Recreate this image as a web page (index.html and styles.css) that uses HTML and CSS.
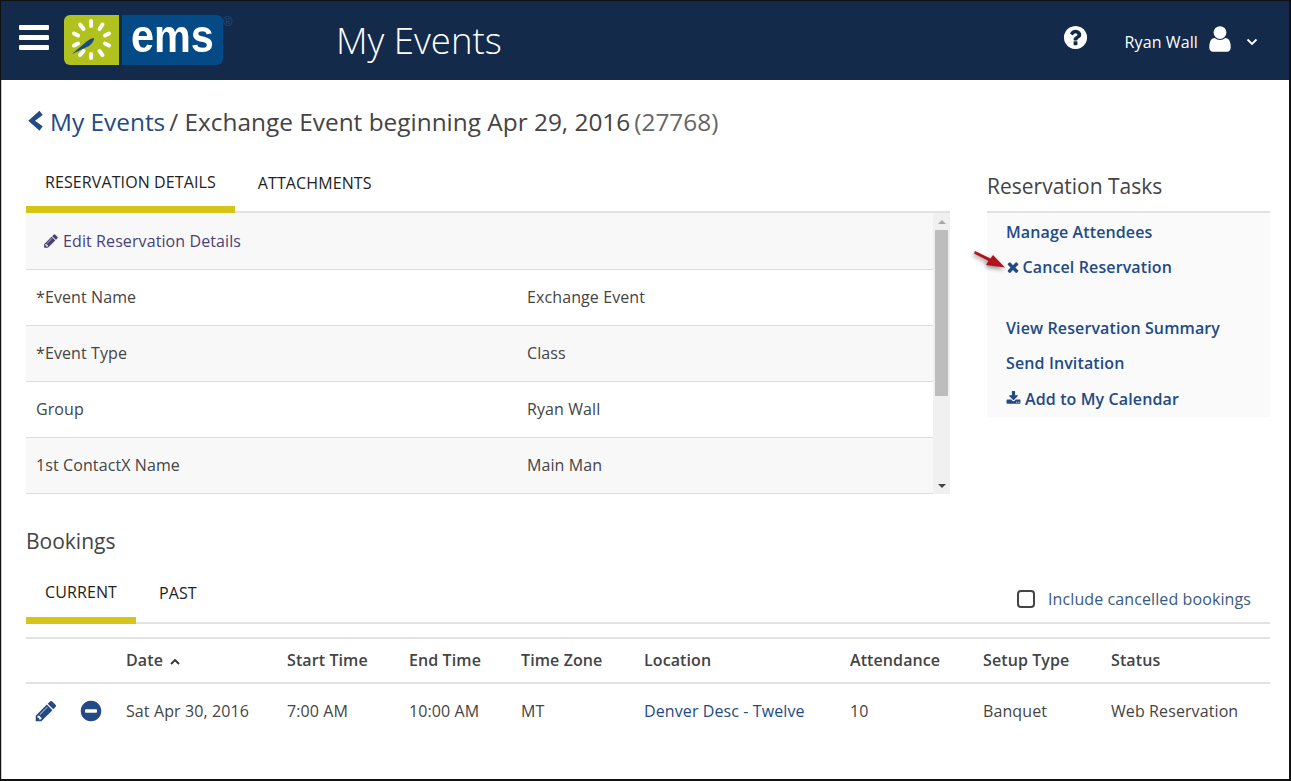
FILE: index.html
```html
<!DOCTYPE html>
<html lang="en">
<head>
	<meta charset="UTF-8">
	<title>My Events</title>
	<link rel="stylesheet" href="styles.css">
</head>
<body>
<div class="page">
	<header class="topbar">
		<button class="burger"><span></span><span></span><span></span></button>
		<div class="logo">
			<div class="logo-mark">
				<svg width="55" height="50" viewBox="0 0 55 50">
					<path stroke="#fff" stroke-width="4" stroke-linecap="round" d="M27 6v5M38.500 9.500l-3 4.500M45 18.500l-4 2M45 30.500l-4-2M38.500 40l-3-4M27 39v4M16 40l3.500-4M10 30.500l4-2M10 18.500l4 2M16 9.500l3.500 4.500"/>
					<path d="M8 39L22 27Q27 23 30 23Q30 27 25 31Z" fill="#1a4a84"/>
				</svg>
			</div>
			<div class="logo-word"><span class="logo-letters">ems</span></div>
			<span class="logo-reg">®</span>
		</div>
		<div class="app-title">My Events</div>
		<div class="top-right">
			<svg class="help-icon" width="27" height="27" viewBox="0 0 1792 1792"><path fill="#fff" d="M1024 1376v-192q0-14-9-23t-23-9h-192q-14 0-23 9t-9 23v192q0 14 9 23t23 9h192q14 0 23-9t9-23zm256-672q0-88-55.500-163t-138.500-116-170-41q-243 0-371 213-15 24 8 42l132 100q7 6 19 6 16 0 25-12 53-68 86-92 34-24 86-24 48 0 85.500 26t37.500 59q0 38-20 61t-68 45q-63 28-115.500 86.500t-52.500 125.500v36q0 14 9 23t23 9h192q14 0 23-9t9-23q0-19 21.500-49.500t54.500-49.500q32-18 49-28.500t46-35 44.500-48 28-60.500 12.500-81zm384 192q0 209-103 385.500t-279.500 279.500-385.500 103-385.500-103-279.500-279.500-103-385.500 103-385.500 279.500-279.500 385.500-103 385.500 103 279.500 279.500 103 385.500z"/></svg>
			<span class="user-name">Ryan Wall</span>
			<svg class="user-icon" width="30" height="30" viewBox="0 0 1792 1792"><path fill="#fff" d="M1536 1399q0 109-62.500 187t-150.500 78h-854q-88 0-150.500-78t-62.500-187q0-85 8.500-160.500t31.500-152 58.500-131 94-89 134.500-34.500q131 128 313 128t313-128q76 0 134.500 34.500t94 89 58.500 131 31.500 152 8.500 160.500zm-256-887q0 159-112.500 271.500t-271.500 112.500-271.500-112.500-112.500-271.500 112.500-271.500 271.500-112.500 271.500 112.500 112.500 271.500z"/></svg>
			<svg class="caret" width="12" height="8" viewBox="0 0 12 8"><path d="M1.500 1.500L6 6l4.500-4.500" fill="none" stroke="#fff" stroke-width="1.800"/></svg>
		</div>
	</header>

	<main class="content">
		<h1 class="crumb">
			<svg class="crumb-back" width="18" height="24" viewBox="0 0 18 24"><path d="M2.300 11.700L13.500 1.700L16.700 6L9 11.700L16.700 17.300L13.500 21.700z" fill="#234a85"/></svg>
			<a class="crumb-link">My Events</a>
			<span class="crumb-rest">/ Exchange Event beginning Apr 29, 2016</span>
			<span class="crumb-id">(27768)</span>
		</h1>

		<div class="columns">
			<section class="details">
				<div class="tabs tabs-top">
					<a class="tab tab-on">RESERVATION DETAILS</a>
					<a class="tab">ATTACHMENTS</a>
				</div>
				<div class="scroll-box">
					<div class="rows">
						<div class="row row-edit">
							<a class="edit-link">
								<svg width="16" height="16" viewBox="0 0 1792 1792"><path fill="#4a3f78" d="M491 1536l91-91-235-235-91 91v107h128v128h107zm523-928q0-22-22-22-10 0-17 7l-542 542q-7 7-7 17 0 22 22 22 10 0 17-7l542-542q7-7 7-17zm-54-192l416 416-832 832h-416v-416zm683 96q0 53-37 90l-166 166-416-416 166-165q36-38 90-38 53 0 91 38l235 234q37 39 37 91z"/></svg>
								Edit Reservation Details
							</a>
						</div>
						<div class="row"><span class="row-label">*Event Name</span><span>Exchange Event</span></div>
						<div class="row"><span class="row-label">*Event Type</span><span>Class</span></div>
						<div class="row"><span class="row-label">Group</span><span>Ryan Wall</span></div>
						<div class="row"><span class="row-label">1st ContactX Name</span><span>Main Man</span></div>
					</div>
					<div class="scrollbar">
						<i class="arrow-up"></i>
						<div class="scroll-track"><div class="scroll-thumb"></div></div>
						<i class="arrow-down"></i>
					</div>
				</div>
			</section>

			<aside class="tasks">
				<h2 class="tasks-title">Reservation Tasks</h2>
				<ul class="task-list">
					<li>Manage Attendees</li>
					<li class="task-cancel">
						<svg class="task-arrow" width="36" height="26" viewBox="0 0 36 26">
							<path d="M1 1L16.500 8.500L19 5L31 17.500L12 15L14.500 11L0 3.500Z" fill="#b3121d"/>
						</svg>
						<svg class="task-x" width="16" height="16" viewBox="0 0 1792 1792"><path fill="#234a85" d="M1490 1322q0 40-28 68l-136 136q-28 28-68 28t-68-28l-294-294-294 294q-28 28-68 28t-68-28l-136-136q-28-28-28-68t28-68l294-294-294-294q-28-28-28-68t28-68l136-136q28-28 68-28t68 28l294 294 294-294q28-28 68-28t68 28l136 136q28 28 28 68t-28 68l-294 294 294 294q28 28 28 68z"/></svg>
						Cancel Reservation
					</li>
					<li class="task-gap">View Reservation Summary</li>
					<li>Send Invitation</li>
					<li>
						<svg width="15" height="15" viewBox="0 0 1792 1792"><path fill="#234a85" d="M1344 1344q0-26-19-45t-45-19-45 19-19 45 19 45 45 19 45-19 19-45zm256 0q0-26-19-45t-45-19-45 19-19 45 19 45 45 19 45-19 19-45zm128-224v320q0 40-28 68t-68 28h-1472q-40 0-68-28t-28-68v-320q0-40 28-68t68-28h465l135 136q58 56 136 56t136-56l136-136h464q40 0 68 28t28 68zm-325-569q17 41-14 70l-448 448q-18 19-45 19t-45-19l-448-448q-31-29-14-70 17-39 59-39h256v-448q0-26 19-45t45-19h256q26 0 45 19t19 45v448h256q42 0 59 39z"/></svg>
						Add to My Calendar
					</li>
				</ul>
			</aside>
		</div>

		<section class="bookings">
			<h2 class="bookings-title">Bookings</h2>
			<div class="tabs tabs-bookings">
				<a class="tab tab-on">CURRENT</a>
				<a class="tab">PAST</a>
				<label class="include"><span class="check"></span>Include cancelled bookings</label>
			</div>
			<div class="grid grid-head">
				<span></span><span></span>
				<span>Date <svg class="sort" width="12" height="8" viewBox="0 0 12 8"><path d="M2 6l4-4 4 4" fill="none" stroke="#333" stroke-width="1.800"/></svg></span>
				<span>Start Time</span><span>End Time</span><span>Time Zone</span><span>Location</span><span>Attendance</span><span>Setup Type</span><span>Status</span>
			</div>
			<div class="grid grid-row">
				<svg class="row-edit-icon" width="24" height="24" viewBox="0 0 1792 1792"><path fill="#234a85" d="M491 1536l91-91-235-235-91 91v107h128v128h107zm523-928q0-22-22-22-10 0-17 7l-542 542q-7 7-7 17 0 22 22 22 10 0 17-7l542-542q7-7 7-17zm-54-192l416 416-832 832h-416v-416zm683 96q0 53-37 90l-166 166-416-416 166-165q36-38 90-38 53 0 91 38l235 234q37 39 37 91z"/></svg>
				<svg class="row-minus-icon" width="24" height="24" viewBox="0 0 1792 1792"><path fill="#234a85" d="M1344 960v-128q0-26-19-45t-45-19h-768q-26 0-45 19t-19 45v128q0 26 19 45t45 19h768q26 0 45-19t19-45zm320-64q0 209-103 385.500t-279.500 279.500-385.500 103-385.500-103-279.500-279.500-103-385.500 103-385.500 279.500-279.500 385.500-103 385.500 103 279.500 279.500 103 385.500z"/></svg>
				<span>Sat Apr 30, 2016</span><span>7:00 AM</span><span>10:00 AM</span><span>MT</span><a class="loc">Denver Desc - Twelve</a><span>10</span><span>Banquet</span><span>Web Reservation</span>
			</div>
		</section>
	</main>
</div>
</body>
</html>
```

FILE: styles.css
```css
*{
	margin: 0;
	padding: 0;
	box-sizing: border-box;
}
body{
	font: 16px "Open Sans", sans-serif;
	letter-spacing: .1px;
	color: #444;
	background: #fff;
}
.page{
	width: 1291px;
	height: 781px;
	border-style: solid;
	border-color: #111;
	border-width: 1px 2px 2px 1px;
	box-shadow: inset 1px 0 #ccc;
	overflow: hidden;
}

/* top bar */
.topbar{
	display: flex;
	align-items: center;
	height: 79px;
	background: #132a4b;
	color: #fff;
}
.burger{
	display: flex;
	flex-direction: column;
	gap: 5px;
	width: 30px;
	margin-left: 18px;
	margin-top: -6px;
	background: none;
	border: 0;
}
.burger span{
	display: block;
	height: 5px;
	background: #fff;
	border-radius: 1px;
}
.logo{
	position: relative;
	display: flex;
	height: 50px;
	width: 158px;
	margin-left: 15px;
	margin-top: -1px;
}
.logo-mark{
	width: 55px;
	background: #b1c11e;
	border-radius: 6px 0 0 6px;
}
.logo-word{
	flex: 1;
	margin-left: 3px;
	background: #034a87;
	border-radius: 0 6px 6px 0;
	font: bold 46px/42px "Liberation Sans", sans-serif;
	letter-spacing: 0;
	color: #fff;
	padding-left: 9px;
}
.logo-letters{
	display: inline-block;
	transform: scaleX(.9);
	transform-origin: left;
}
.logo-reg{
	position: absolute;
	left: 159px;
	top: -1px;
	font: 13px "Liberation Sans", sans-serif;
	color: #1d4f86;
}
.app-title{
	margin-left: 114px;
	margin-top: -2px;
	font-size: 36.600px;
	font-weight: 300;
	letter-spacing: 0;
}
.top-right{
	display: flex;
	align-items: center;
	margin-left: auto;
	margin-right: 31px;
	margin-top: -4px;
}
.help-icon{
	margin-top: -2px;
}
.user-name{
	margin-left: 36px;
	margin-top: 7px;
}
.user-icon{
	margin-left: 7px;
}
.caret{
	margin-left: 11px;
	margin-top: 7px;
}

/* content */
.content{
	padding: 0 19px 0 25px;
}
.crumb{
	display: flex;
	align-items: center;
	height: 84px;
	padding-bottom: 2px;
	font-size: 24.400px;
	font-weight: 400;
	letter-spacing: 0;
	gap: 6px;
}
.crumb-rest{
	margin-left: -2px;
}
.crumb-link{
	color: #234a85;
}
.crumb-id{
	color: #666;
	margin-left: -2px;
}
.columns{
	display: flex;
	gap: 37px;
}
.details{
	width: 924px;
}
.tabs{
	display: flex;
	border-bottom: 2px solid #e2e2de;
	color: #222;
}
.tabs-top{
	height: 49px;
}
.tab{
	height: 49px;
	padding: 8px 19px 0 23px;
	font-size: 16px;
	line-height: 22px;
}
.tab-on{
	padding: 7px 19px 0;
	border-bottom: 7px solid #d4c518;
}
.scroll-box{
	display: flex;
	height: 281px;
}
.rows{
	width: 907px;
}
.row{
	display: flex;
	align-items: center;
	height: 56px;
	padding: 0 0 2px 10px;
	border-bottom: 1px solid #ddd;
}
.row:nth-child(odd){
	background: #f8f8f8;
}
.row-edit{
	height: 57px;
	padding-bottom: 0;
}
.edit-link{
	display: flex;
	align-items: center;
	gap: 4px;
	margin-left: 7px;
	color: #4a3f78;
}
.row-label{
	width: 491px;
}
.scrollbar{
	display: flex;
	flex-direction: column;
	align-items: center;
	width: 17px;
	background: #f0f0f0;
	padding: 7px 0 6px;
}
.scroll-track{
	flex: 1;
	width: 100%;
	padding: 6px 2px 0;
}
.scroll-thumb{
	height: 166px;
	background: #bdbdbd;
}
.arrow-up,
.arrow-down{
	width: 0;
	height: 0;
	border-left: 4px solid transparent;
	border-right: 4px solid transparent;
}
.arrow-up{
	border-bottom: 4px solid #a8a8a8;
}
.arrow-down{
	border-top: 4px solid #444;
}

/* tasks */
.tasks{
	width: 283px;
}
.tasks-title{
	height: 49px;
	padding-top: 7px;
	font-size: 21px;
	line-height: 30px;
	font-weight: 400;
	letter-spacing: 0;
	border-bottom: 2px solid #e2e2de;
}
.task-list{
	list-style: none;
	background: #fafafa;
	height: 204px;
	padding: 1px 0 0 19px;
	color: #234a85;
	font-weight: 600;
	letter-spacing: .12px;
}
.task-list li{
	display: flex;
	align-items: center;
	gap: 4px;
	height: 35.500px;
}
.task-cancel{
	position: relative;
}
.task-arrow{
	position: absolute;
	left: -32px;
	top: 0;
	filter: drop-shadow(-1px 2px 2px rgba(0, 0, 0, .45));
}
.task-x{
	margin-left: -1.500px;
	margin-right: -2px;
}
.task-gap{
	margin-top: 25px;
}

/* bookings */
.bookings-title{
	margin-top: 32px;
	font-size: 21px;
	line-height: 30px;
	font-weight: 400;
	letter-spacing: 0;
}
.tabs-bookings{
	height: 52px;
	margin-top: 16px;
}
.tabs-bookings .tab{
	height: 52px;
	padding-top: 10px;
}
.tabs-bookings .tab-on{
	padding-top: 9px;
}
.include{
	display: flex;
	align-items: center;
	height: 36px;
	margin: 9px 19px 0 auto;
	color: #3a5a80;
}
.check{
	width: 18px;
	height: 18px;
	margin-right: 13px;
	border: 2px solid #444;
	border-radius: 4px;
	background: #fff;
}
.grid{
	display: grid;
	grid-template-columns: 55px 45px 161px 122px 112px 123px 206px 133px 128px 159px;
	align-items: center;
}
.grid-head{
	height: 47px;
	margin-top: 13px;
	padding-bottom: 2px;
	border-top: 2px solid #e2e2de;
	border-bottom: 2px solid #e2e2de;
	font-weight: 600;
}
.sort{
	margin-left: 2px;
}
.grid-row{
	height: 55px;
	padding-bottom: 2px;
}
.row-edit-icon{
	margin-left: 8px;
}
.row-minus-icon{
	margin-left: -2px;
}
.loc{
	color: #234a85;
}
```
